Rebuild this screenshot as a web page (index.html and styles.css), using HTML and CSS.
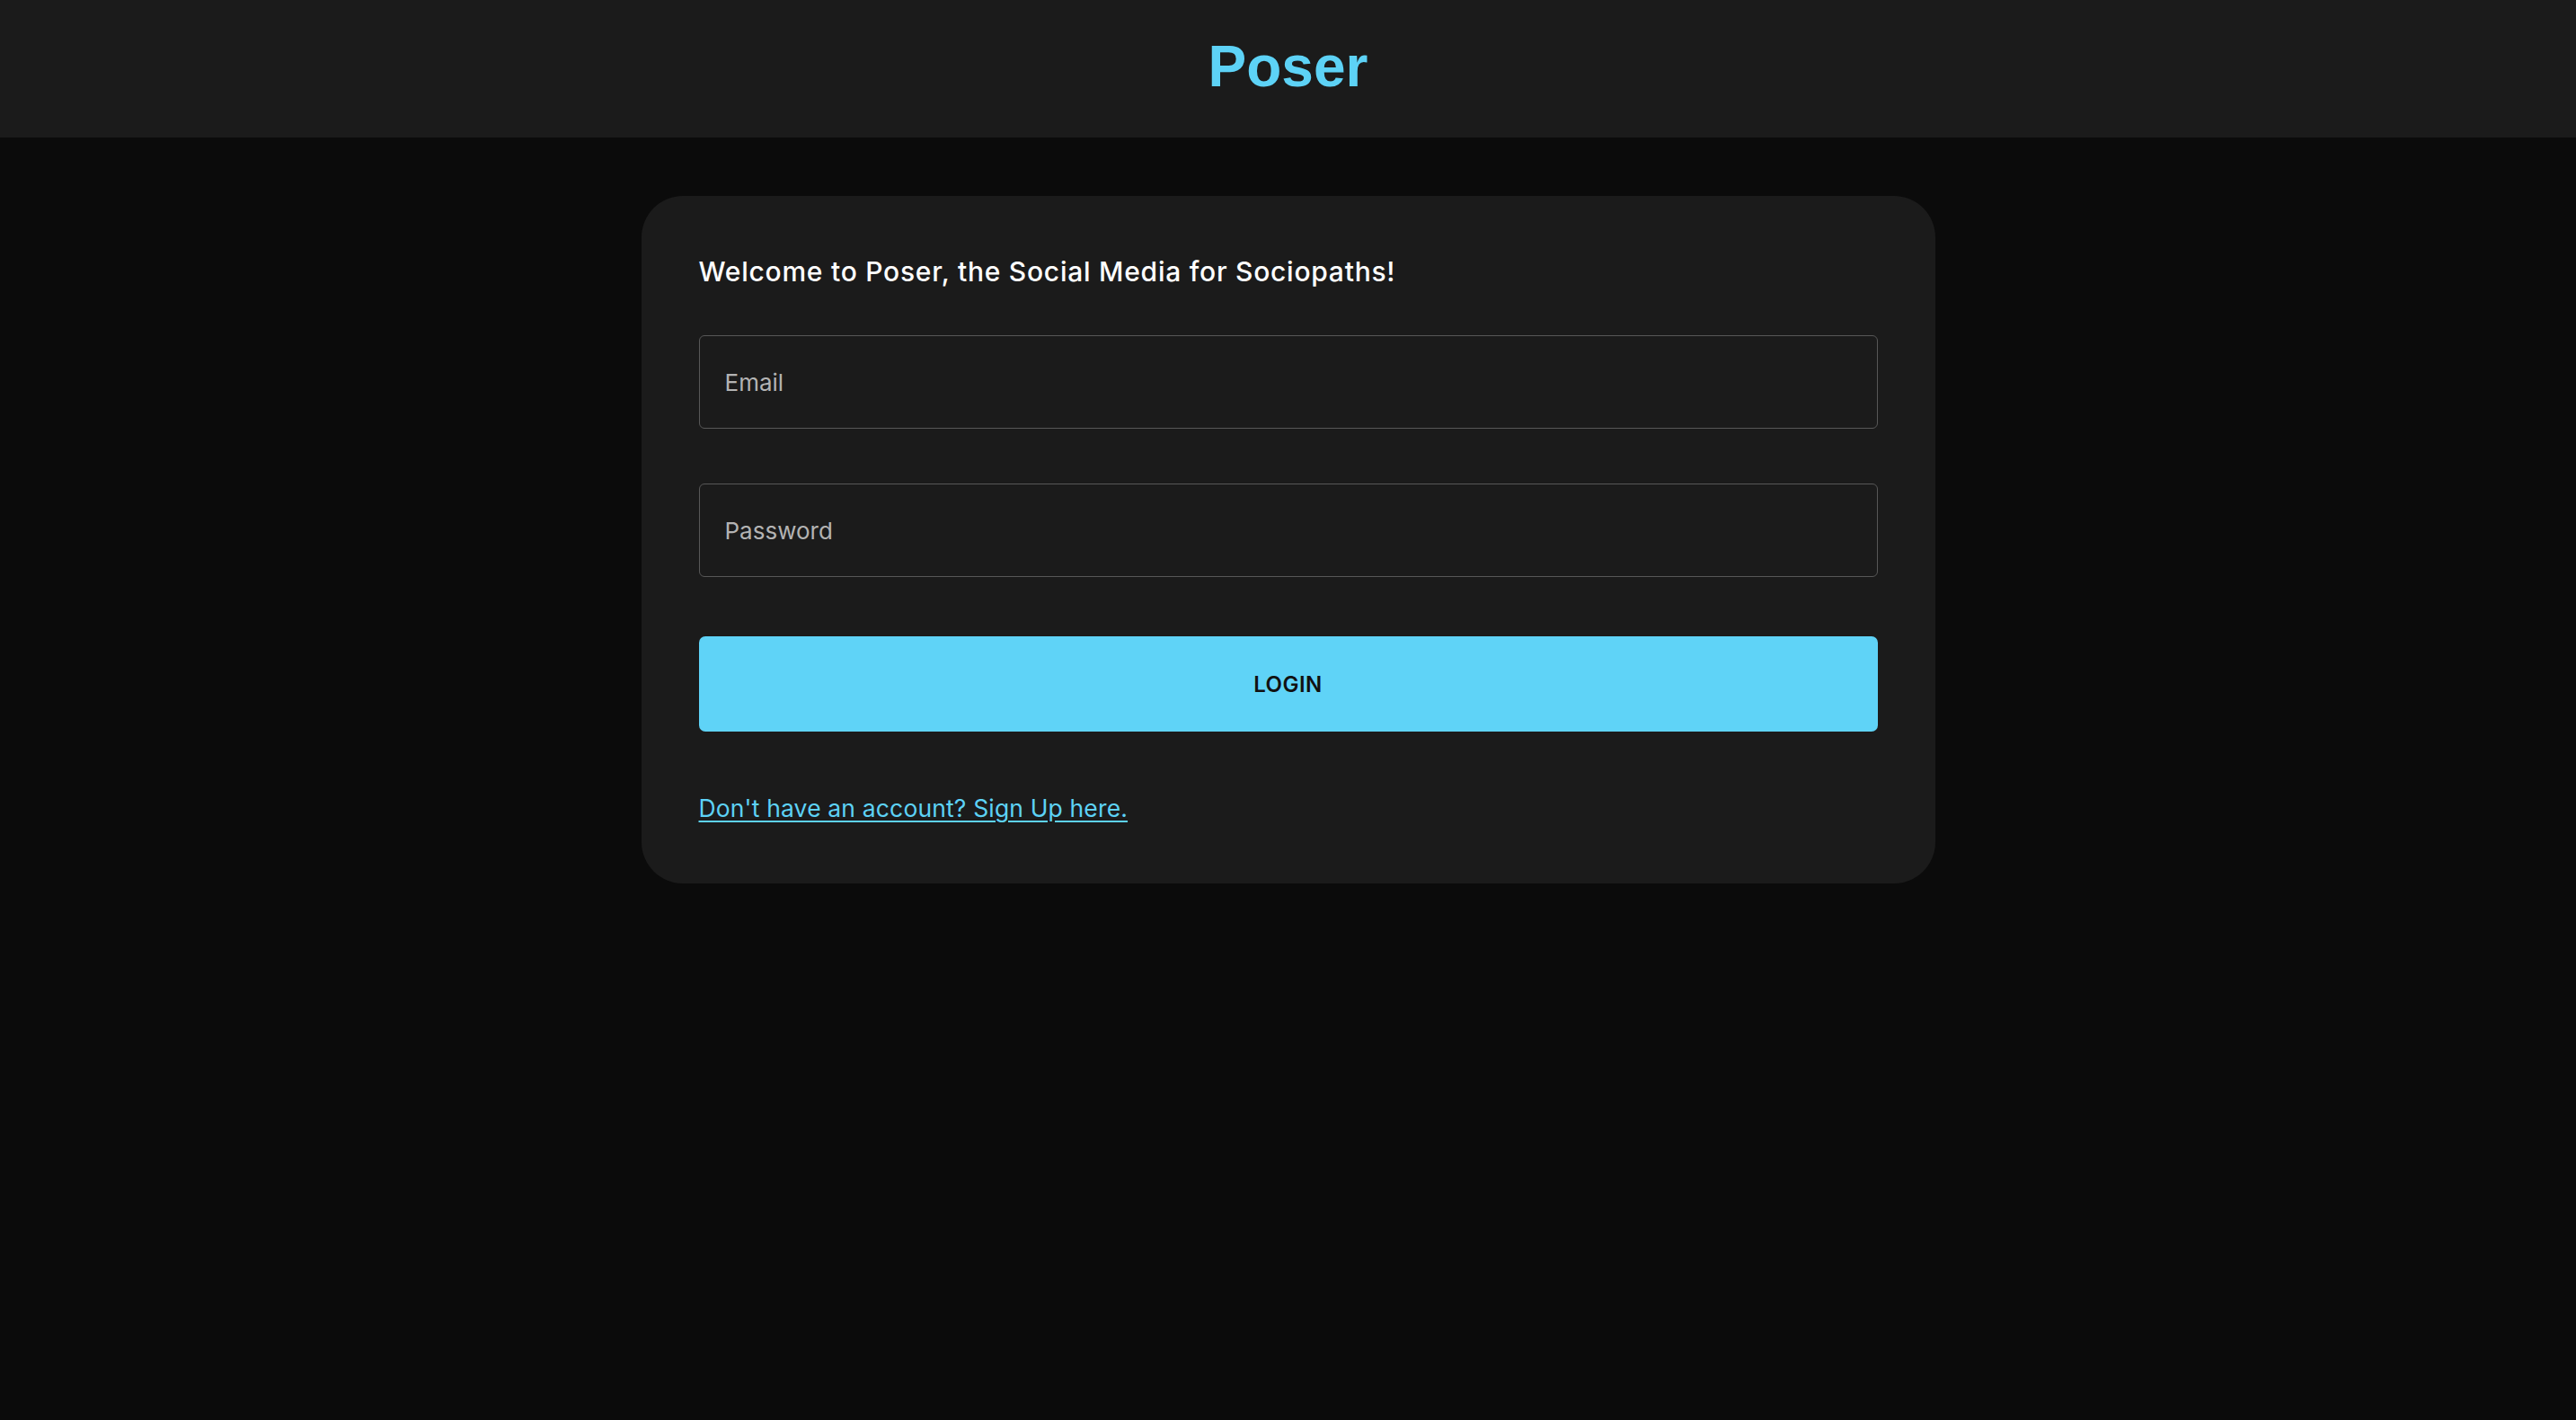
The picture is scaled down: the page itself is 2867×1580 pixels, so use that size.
FILE: index.html
```html
<!DOCTYPE html>
<html lang="en">
<head>
<meta charset="utf-8">
<title>Poser</title>
<link rel="stylesheet" href="styles.css">
</head>
<body>
<header class="topbar">
  <h1 class="brand">Poser</h1>
</header>
<main class="page">
  <section class="card">
    <h2 class="welcome">Welcome to Poser, the Social Media for Sociopaths!</h2>
    <form class="login-form">
      <input class="field" type="email" placeholder="Email">
      <input class="field" type="password" placeholder="Password">
      <button class="login-btn" type="button">LOGIN</button>
    </form>
    <a class="signup-link" href="#">Don't have an account? Sign Up here.</a>
  </section>
</main>
</body>
</html>
```

FILE: styles.css
```css
html, body {
  margin: 0;
  padding: 0;
}
body {
  background: #0b0b0b;
  color: #ffffff;
  font-family: "Inter", "Open Sans", sans-serif;
  min-height: 1580px;
}
.topbar {
  height: 153px;
  background: #1b1b1b;
  display: flex;
  align-items: center;
  justify-content: center;
}
.brand {
  margin: 0;
  font-family: "Liberation Sans", Arial, sans-serif;
  font-weight: 700;
  font-size: 64px;
  line-height: 1;
  color: #5dd2f6;
  padding-bottom: 5px;
}
.page {
  padding-top: 65px;
}
.card {
  width: 1440px;
  box-sizing: border-box;
  margin: 0 auto;
  background: #1b1b1b;
  border-radius: 46px;
  padding: 64px;
  display: flex;
  flex-direction: column;
}
.welcome {
  margin: 0;
  padding-top: 2px;
  font-size: 30px;
  font-weight: 500;
  letter-spacing: 0.75px;
  line-height: 36px;
  color: #ffffff;
}
.login-form {
  margin-top: 53px;
  display: flex;
  flex-direction: column;
}
.field {
  height: 104px;
  box-sizing: border-box;
  background: #1b1b1b;
  border: 1.5px solid #575757;
  border-radius: 6px;
  padding: 0 28px;
  font-family: inherit;
  font-size: 26px;
  color: #ffffff;
  outline: none;
}
.field::placeholder {
  color: #b3b3b3;
}
.field + .field {
  margin-top: 61px;
}
.login-btn {
  margin-top: 66px;
  height: 106px;
  border: none;
  border-radius: 7px;
  background: #5fd3f7;
  color: #111111;
  font-family: inherit;
  font-size: 24px;
  font-weight: 600;
  letter-spacing: 0.5px;
  cursor: pointer;
}
.signup-link {
  margin-top: 65px;
  align-self: flex-start;
  font-size: 26.5px;
  letter-spacing: 0.15px;
  line-height: 40px;
  color: #5dd2f6;
  text-decoration: underline;
  text-underline-offset: 4px;
}
```
